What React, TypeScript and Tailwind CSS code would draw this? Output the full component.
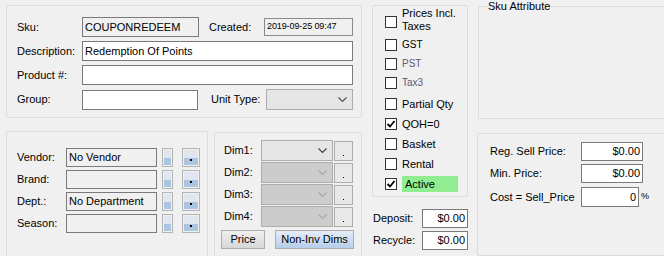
import React from 'react'

const field = 'border border-[#7a7a7a] bg-white h-[20px] px-[2px] flex items-center leading-none'

function DotButton({ narrow, dot }: { narrow?: boolean; dot?: boolean }) {
  return (
    <div className={`h-[19px] ${narrow ? 'w-[11px]' : 'w-[18px]'} border border-[#b4b4b4] p-[1px] flex flex-col`}>
      <div className="flex-1 bg-[#dfe6ef]" />
      <div className="flex-1 bg-[#abc4e1] flex items-start justify-center">
        {dot && <div className="w-[2px] h-[2px] bg-black mt-[1px]" />}
      </div>
    </div>
  )
}

function Chevron({ color }: { color: string }) {
  return (
    <svg width="9" height="6" viewBox="0 0 9 6" className="mr-[5px]">
      <path d="M0.5 0.5 L4.5 4.5 L8.5 0.5" fill="none" stroke={color} strokeWidth="1.2" />
    </svg>
  )
}

function Combo({ w, bg, chev }: { w: string; bg: string; chev: string }) {
  return (
    <div className={`${w} h-[21px] border border-[#adadad] ${bg} flex items-center justify-end`}>
      <Chevron color={chev} />
    </div>
  )
}

function Check({ label, checked, className = '', h = 'h-[20px]', green }: { label: React.ReactNode; checked?: boolean; className?: string; h?: string; green?: boolean }) {
  return (
    <div className={`flex items-center ${h}`}>
      <div className="w-[12px] h-[12px] border border-[#333] bg-white flex items-center justify-center shrink-0">
        {checked && (
          <svg width="10" height="10" viewBox="0 0 10 10">
            <path d="M1.5 5 L4 7.5 L8.5 2" fill="none" stroke="black" strokeWidth="1.8" />
          </svg>
        )}
      </div>
      {green ? (
        <div className="ml-[5px] w-[56px] h-[16px] bg-[#90ee90] pl-[3px] flex items-center text-[11px]">{label}</div>
      ) : (
        <div className={`ml-[5px] ${className}`}>{label}</div>
      )}
    </div>
  )
}

export default function App() {
  return (
    <div className="w-[664px] h-[256px] bg-[#f0f0f0] flex items-start overflow-hidden text-[11px] text-black" style={{ fontFamily: '"Liberation Sans", Arial, sans-serif' }}>
      {/* left column */}
      <div className="ml-[6px] mt-[5px] w-[356px] flex flex-col">
        <div className="h-[113px] border border-[#dcdcdc] rounded-[2px] pl-[10px] pt-[11px] pr-[8px] flex flex-col gap-[4px]">
          <div className="flex items-center h-[20px]">
            <span className="w-[65px]">Sku:</span>
            <div className="w-[117px] h-[20px] border border-[#7a7a7a] px-[2px] flex items-center leading-none">COUPONREDEEM</div>
            <span className="ml-[10px] w-[55px]">Created:</span>
            <div className="w-[89px] h-[18px] border border-[#8a8a8a] flex items-center px-[2px] text-[9px] tracking-[-0.1px]">2019-09-25 09:47</div>
          </div>
          <div className="flex items-center">
            <span className="w-[65px]">Description:</span>
            <div className={`${field} flex-1`}>Redemption Of Points</div>
          </div>
          <div className="flex items-center">
            <span className="w-[65px]">Product #:</span>
            <div className={`${field} flex-1`} />
          </div>
          <div className="flex items-center">
            <span className="w-[65px]">Group:</span>
            <div className={`${field} w-[116px]`} />
            <span className="ml-[13px] w-[55px]">Unit Type:</span>
            <Combo w="w-[87px]" bg="bg-[#e5e5e5]" chev="#555" />
          </div>
        </div>

        <div className="mt-[13px] flex gap-[6px]">
          <div className="w-[202px] h-[130px] border border-[#dcdcdc] rounded-[2px] pl-[10px] pt-[16px] flex flex-col gap-[3px]">
            {[['Vendor:', 'No Vendor'], ['Brand:', ''], ['Dept.:', 'No Department'], ['Season:', '']].map(([l, v]) => (
              <div key={l} className="flex items-center h-[19px]">
                <span className="w-[49px]">{l}</span>
                <div className="w-[91px] h-[19px] border border-[#7a7a7a] flex items-center px-[2px]">{v}</div>
                <div className="ml-[5px]"><DotButton narrow /></div>
                <div className="ml-[9px]"><DotButton dot /></div>
              </div>
            ))}
          </div>

          <div className="w-[148px] h-[130px] mt-[1px] border border-[#dcdcdc] rounded-[2px] pl-[6px] pt-[7px] flex flex-col gap-[1px]">
            {['Dim1:', 'Dim2:', 'Dim3:', 'Dim4:'].map((d, i) => (
              <div key={d} className="flex items-center h-[21px]">
                <span className="w-[40px] pl-[3px]">{d}</span>
                <Combo w="w-[72px]" bg={i === 0 ? 'bg-[#e5e5e5]' : 'bg-[#cccccc]'} chev={i === 0 ? '#444' : '#a8a8a8'} />
                <div className="ml-[1px] w-[19px] h-[20px] border border-[#adadad] bg-[#e8e8e8] flex items-end justify-center pb-[4px]">
                  <div className="w-[1px] h-[1px] bg-black" />
                </div>
              </div>
            ))}
            <div className="flex mt-[2px]">
              <div className="w-[44px] h-[19px] border border-[#adadad] bg-gradient-to-b from-[#f0f0f0] to-[#d6d6d6] flex items-center justify-center">Price</div>
              <div className="ml-[10px] w-[79px] h-[19px] border border-[#adadad] bg-gradient-to-b from-[#e6eef7] to-[#b5cde9] flex items-center justify-center">Non-Inv Dims</div>
            </div>
          </div>
        </div>
      </div>

      {/* middle column */}
      <div className="ml-[10px] mt-[5px] w-[98px] flex flex-col">
        <div className="h-[192px] border border-[#dcdcdc] rounded-[2px] pl-[12px] pt-[3px] flex flex-col">
          <Check h="h-[26px]" label={<div className="leading-[13px] pb-[4px]">Prices Incl.<br />Taxes</div>} />
          <Check h="h-[19px]" className="text-[10px]" label="GST" />
          <Check h="h-[19px]" className="text-[10px] text-[#5e5a6e]" label="PST" />
          <Check h="h-[19px]" className="text-[10px] text-[#5e5a6e]" label="Tax3" />
          <div className="mt-[2px]" />
          <Check label="Partial Qty" />
          <Check label="QOH=0" checked />
          <Check label="Basket" />
          <Check label="Rental" />
          <Check label="Active" checked green />
        </div>
        <div className="mt-[12px] flex flex-col gap-[3px] pl-[1px]">
          {['Deposit:', 'Recycle:'].map((l) => (
            <div key={l} className="flex items-center h-[19px]">
              <span className="w-[49px]">{l}</span>
              <div className="w-[46px] h-[19px] border border-[#7a7a7a] bg-white flex items-center justify-end pr-[2px]">$0.00</div>
            </div>
          ))}
        </div>
      </div>

      {/* right column */}
      <div className="ml-[9px] w-[200px] shrink-0 flex flex-col">
        <fieldset className="h-[119px] border border-[#dcdcdc] rounded-[2px] ml-[1px]">
          <legend className="ml-[8px] px-[1px] leading-[13px]">Sku Attribute</legend>
        </fieldset>
        <div className="mt-[14px] h-[123px] border border-[#dcdcdc] rounded-[2px] pl-[12px] pt-[8px] flex flex-col gap-[3px]">
          {[['Reg. Sell Price:', '$0.00'], ['Min. Price:', '$0.00']].map(([l, v]) => (
            <div key={l} className="flex items-center h-[19px]">
              <span className="w-[91px]">{l}</span>
              <div className="w-[62px] h-[19px] border border-[#7a7a7a] bg-white flex items-center justify-end pr-[2px]">{v}</div>
            </div>
          ))}
          <div className="flex items-center h-[20px] mt-[1px]">
            <span className="w-[91px]">Cost = Sell_Price</span>
            <div className="w-[58px] h-[20px] border border-[#7a7a7a] bg-white flex items-center justify-end pr-[2px]">0</div>
            <span className="ml-[2px] text-[9px]">%</span>
          </div>
        </div>
      </div>
    </div>
  )
}
